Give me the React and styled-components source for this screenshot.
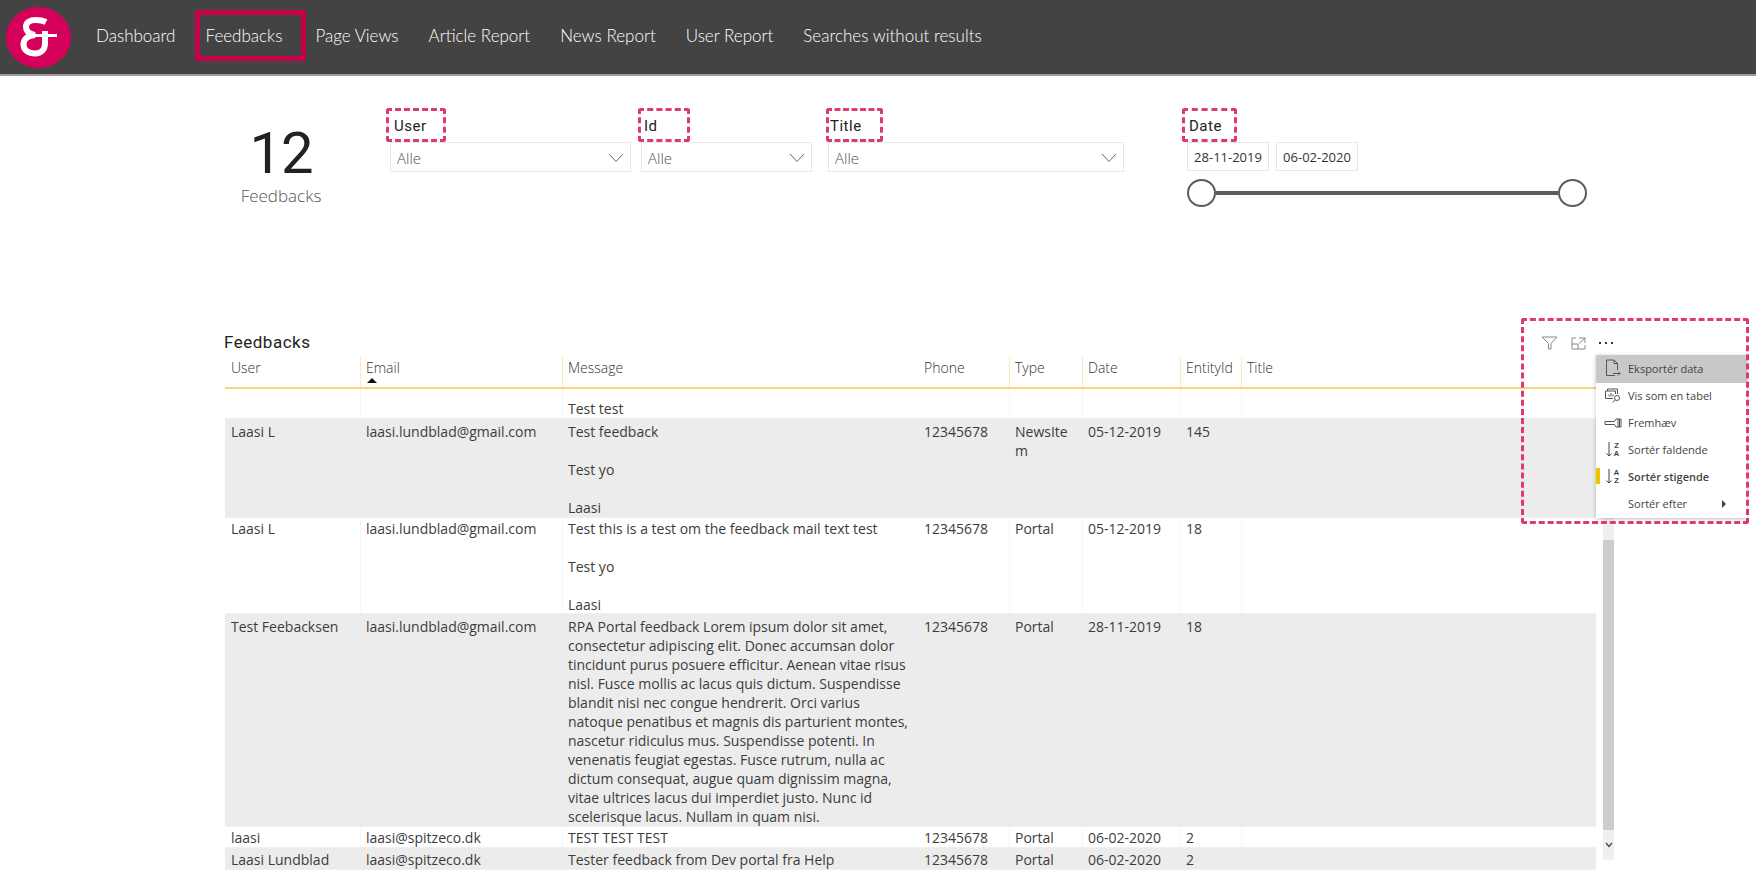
import React from 'react';
import styled, { createGlobalStyle } from 'styled-components';

const GlobalStyle = createGlobalStyle`
  html, body {
    margin: 0;
    padding: 0;
    background: #fff;
  }
  body {
    font-family: "Open Sans", "Liberation Sans", sans-serif;
    overflow: hidden;
  }
`;

const PINK = '#de3a72';

// --- nav ---
const Page = styled.div`
  position: relative;
  width: 1756px;
  height: 876px;
  overflow: hidden;
`;

const Nav = styled.nav`
  display: flex;
  align-items: center;
  height: 74px;
  box-sizing: content-box;
  background: #434343;
  border-bottom: 2px solid #9a9a9a;
  padding-left: 6px;
`;

const LogoWrap = styled.div`
  width: 65px;
  height: 61px;
  flex-shrink: 0;
  margin-right: 10px;
  svg { display: block; }
`;

const NavList = styled.div`
  display: flex;
  align-items: center;
  margin-bottom: 3px;
`;

const NavItem = styled.a`
  font-family: Lato, "Liberation Sans", sans-serif;
  font-size: 17px;
  font-weight: 300;
  color: #fff;
  white-space: nowrap;
  padding: ${p => (p.$active ? '0 19px 0 6px' : '0 15px')};
  line-height: 41px;
  border: ${p => (p.$active ? '5px solid #c8004a' : '5px solid transparent')};
  border-radius: 2px;
  margin: ${p => (p.$active ? '0 -6px 0 4px' : '0 -5px')};
`;

// --- filters ---
const FilterRow = styled.section`
  display: flex;
  padding: 32px 0 0 221px;
  height: 208px;
`;

const Kpi = styled.div`
  width: 120px;
  margin-right: 49px;
  padding-top: 14px;
  text-align: center;
`;

const KpiValue = styled.div`
  font-family: Roboto, sans-serif;
  font-size: 58px;
  line-height: 62px;
  letter-spacing: -1px;
  color: #222;
`;

const KpiLabel = styled.div`
  font-size: 17px;
  font-weight: 300;
  line-height: 22px;
  margin-top: 1px;
  color: #555;
`;

const Filter = styled.div`
  width: ${p => p.$w}px;
  margin-left: ${p => p.$ml || 0}px;
`;

const FilterLabel = styled.div`
  display: block;
  box-sizing: border-box;
  width: ${p => p.$w}px;
  height: 34px;
  line-height: 30px;
  padding-left: ${p => p.$pl}px;
  margin-left: ${p => p.$ml || 0}px;
  font-family: Roboto, sans-serif;
  font-size: 15px;
  letter-spacing: 0.5px;
  color: #222;
  border: 3px dashed ${PINK};
  border-radius: 3px;
`;

const Select = styled.div`
  display: flex;
  align-items: center;
  justify-content: space-between;
  box-sizing: border-box;
  height: 30px;
  padding: 1px 6px 0;
  font-size: 15px;
  font-weight: 300;
  color: #555;
  border: 1px solid #e8e8e8;
  svg { display: block; }
`;

const DateInputs = styled.div`
  display: flex;
  gap: 7px;
`;

const DateInput = styled.div`
  width: 82px;
  height: 29px;
  box-sizing: border-box;
  border: 1px solid #e8e8e8;
  font-size: 13px;
  line-height: 28px;
  text-align: center;
  color: #333;
`;

const Slider = styled.div`
  display: flex;
  align-items: center;
  margin-top: 8px;
`;

const Thumb = styled.div`
  width: 29px;
  height: 28px;
  box-sizing: border-box;
  border: 2px solid #5c5c5c;
  border-radius: 50%;
  background: #fff;
  flex-shrink: 0;
`;

const Track = styled.div`
  flex: 1;
  height: 4px;
  background: #5c5c5c;
`;

// --- table ---
const Section = styled.section`
  padding-left: 225px;
  width: 1371px;
`;

const SectionTitle = styled.h2`
  margin: 0 0 0 -1px;
  height: 33px;
  box-sizing: border-box;
  padding-top: 17px;
  font-family: Roboto, sans-serif;
  font-weight: 400;
  font-size: 17px;
  letter-spacing: 0.5px;
  line-height: 18px;
  color: #222;
`;

const COLUMNS = '135px 202px 356px 91px 73px 98px 61px 355px';

const HeaderRow = styled.div`
  display: grid;
  grid-template-columns: ${COLUMNS};
  margin-top: 8px;
  height: 30px;
  border-bottom: 2px solid #fdd27c;
`;

const HeaderCell = styled.div`
  position: relative;
  padding: 0 5px;
  font-size: 14px;
  font-weight: 300;
  line-height: 22px;
  color: #333;
  border-left: 1px solid ${p => (p.$plain ? 'transparent' : '#fde8bd')};
`;

const SortArrow = styled.span`
  position: absolute;
  left: 6px;
  bottom: 4px;
  width: 0;
  height: 0;
  border-left: 5px solid transparent;
  border-right: 5px solid transparent;
  border-bottom: 5px solid #111;
`;

const Body = styled.div`
  height: 481px;
  overflow: hidden;
`;

const Row = styled.div`
  display: grid;
  grid-template-columns: ${COLUMNS};
  height: ${p => p.$h}px;
  box-sizing: border-box;
  background: ${p => (p.$shade ? '#ececec' : '#fff')};
  border-bottom: 1px solid #f0f0f0;
`;

const Cell = styled.div`
  padding: ${p => (p.$bottom ? '0 5px' : `${p.$pt}px 5px 0`)};
  display: ${p => (p.$bottom ? 'flex' : 'block')};
  align-items: flex-end;
  font-size: 14px;
  line-height: 19px;
  color: #3c3c3c;
  white-space: pre;
  overflow: hidden;
  border-left: 1px solid ${p => (p.$plain || p.$shade ? 'transparent' : '#f6f6f6')};
`;

const Scrollbar = styled.div`
  position: absolute;
  left: 1603px;
  top: 518px;
  width: 11px;
  height: 342px;
  display: flex;
  flex-direction: column;
  background: #f0f0f0;
`;

const ScrollThumb = styled.div`
  margin-top: 22px;
  height: 290px;
  background: #cdcdcd;
`;

const ScrollDown = styled.div`
  flex: 1;
  display: flex;
  align-items: center;
  justify-content: center;
  svg { display: block; }
`;

// --- context menu ---
const Annotation = styled.div`
  position: absolute;
  left: 1521px;
  top: 318px;
  width: 228px;
  height: 206px;
  box-sizing: border-box;
  border: 3px dashed ${PINK};
  border-radius: 3px;
  pointer-events: none;
`;

const VisualHeader = styled.div`
  position: absolute;
  left: 1541px;
  top: 336px;
  display: flex;
  align-items: center;
  gap: 13px;
  svg { display: block; }
`;

const Menu = styled.div`
  position: absolute;
  left: 1596px;
  top: 355px;
  width: 151px;
  background: #fff;
  box-shadow: 0 1px 4px rgba(0, 0, 0, 0.25);
`;

const MenuItem = styled.div`
  position: relative;
  display: flex;
  align-items: center;
  height: ${p => (p.$hover ? 28 : 27)}px;
  padding-bottom: 2px;
  box-sizing: border-box;
  background: ${p => (p.$hover ? '#c8c8c8' : '#fff')};
  font-size: 11px;
  font-weight: ${p => (p.$selected ? 600 : 400)};
  color: #444;
  white-space: nowrap;
`;

const MenuIcon = styled.span`
  width: 32px;
  flex-shrink: 0;
  display: flex;
  justify-content: center;
  padding-left: 2px;
  box-sizing: border-box;
  svg { display: block; }
`;

const SelectedMark = styled.span`
  position: absolute;
  left: 0;
  top: 4px;
  width: 4px;
  height: 16px;
  background: #f2c200;
`;

const SubArrow = styled.span`
  position: absolute;
  left: 126px;
  top: 9px;
  width: 0;
  height: 0;
  border-top: 4px solid transparent;
  border-bottom: 4px solid transparent;
  border-left: 4px solid #444;
`;

const Chevron = () => (
  <svg width="16" height="10" viewBox="0 0 16 10" fill="none" stroke="#666" strokeWidth="1">
    <path d="M1 1l7 7.500L15 1" />
  </svg>
);

const Logo = () => (
  <svg width="65" height="61" viewBox="0 0 65 61">
    <ellipse cx="32.500" cy="30.500" rx="32.500" ry="30.500" fill="#d4005a" />
    <g fill="none" stroke="#fff" strokeLinecap="butt">
      <path
        d="M40 15C37 13.500 33 13 29.500 13 24 13 20 15.500 20 20c0 4 3 7 9 8-7 .5-11.500 4-11.500 9.500C17.500 43 22.500 46.500 29 46.500c6.500 0 10-4.500 10-10V24"
        strokeWidth="6"
      />
      <path d="M29 28.500h22" strokeWidth="3" />
    </g>
  </svg>
);

const ICON = { fill: 'none', stroke: '#555', strokeWidth: 1 };

const SortGlyph = ({ top, bottom }) => (
  <svg width="16" height="17" viewBox="0 0 16 17">
    <path d="M4 1v14M1.500 12.500L4 15l2.500-2.500" fill="none" stroke="#444" strokeWidth="1" />
    <text x="11.500" y="7" fontSize="7.500" fontFamily="Liberation Sans" fontWeight="700" textAnchor="middle" fill="#444">{top}</text>
    <text x="11.500" y="15" fontSize="7.500" fontFamily="Liberation Sans" fontWeight="700" textAnchor="middle" fill="#444">{bottom}</text>
  </svg>
);

const icons = {
  export: (
    <svg width="16" height="18" viewBox="0 0 16 18" {...ICON}>
      <path d="M10 16.500H1.500V1H9l3.500 3.500V11M9 1v3.500h3.500M8 14.500h7M13 12.500l2 2-2 2" />
    </svg>
  ),
  table: (
    <svg width="18" height="16" viewBox="0 0 18 16" {...ICON}>
      <path d="M9 10.500H1.500V3h10v3M3.500 3V1h10v5M5 8.500V6.500M7 8.500V5M9 8.500V6.500" />
      <circle cx="13" cy="10" r="2.500" />
      <path d="M11.200 12L8.500 14.500" />
    </svg>
  ),
  spotlight: (
    <svg width="18" height="10" viewBox="0 0 18 10" {...ICON}>
      <path d="M1 3.500h9.500L12 1h5v8h-5l-1.500-2.500H1zM14 1v8M15.500 1v8" />
    </svg>
  ),
  sortDesc: <SortGlyph top="Z" bottom="A" />,
  sortAsc: <SortGlyph top="A" bottom="Z" />,
};

const menuItems = [
  { label: 'Eksportér data', icon: 'export', hover: true },
  { label: 'Vis som en tabel', icon: 'table' },
  { label: 'Fremhæv', icon: 'spotlight' },
  { label: 'Sortér faldende', icon: 'sortDesc' },
  { label: 'Sortér stigende', icon: 'sortAsc', selected: true },
  { label: 'Sortér efter', sub: true },
];

const navItems = ['Dashboard', 'Feedbacks', 'Page Views', 'Article Report', 'News Report', 'User Report', 'Searches without results'];

const headers = ['User', 'Email', 'Message', 'Phone', 'Type', 'Date', 'EntityId', 'Title'];

// Phone has no visible column rule, the first column neither
const PLAIN_COLUMNS = [0, 3];

const rows = [
  { h: 30, bottom: true, cells: ['', '', 'Test test', '', '', '', '', ''] },
  {
    h: 99,
    pt: 3,
    shade: true,
    cells: ['Laasi L', 'laasi.lundblad@gmail.com', 'Test feedback\n\nTest yo\n\nLaasi', '12345678', 'NewsIte\nm', '05-12-2019', '145', ''],
  },
  {
    h: 96,
    pt: 1,
    cells: ['Laasi L', 'laasi.lundblad@gmail.com', 'Test this is a test om the feedback mail text test\n\nTest yo\n\nLaasi', '12345678', 'Portal', '05-12-2019', '18', ''],
  },
  {
    h: 213,
    pt: 3,
    shade: true,
    cells: [
      'Test Feebacksen',
      'laasi.lundblad@gmail.com',
      'RPA Portal feedback Lorem ipsum dolor sit amet,\nconsectetur adipiscing elit. Donec accumsan dolor\ntincidunt purus posuere efficitur. Aenean vitae risus\nnisl. Fusce mollis ac lacus quis dictum. Suspendisse\nblandit nisi nec congue hendrerit. Orci varius\nnatoque penatibus et magnis dis parturient montes,\nnascetur ridiculus mus. Suspendisse potenti. In\nvenenatis feugiat egestas. Fusce rutrum, nulla ac\ndictum consequat, augue quam dignissim magna,\nvitae ultrices lacus dui imperdiet justo. Nunc id\nscelerisque lacus. Nullam in quam nisi.',
      '12345678',
      'Portal',
      '28-11-2019',
      '18',
      '',
    ],
  },
  { h: 21, pt: 1, cells: ['laasi', 'laasi@spitzeco.dk', 'TEST TEST TEST', '12345678', 'Portal', '06-02-2020', '2', ''] },
  { h: 22, pt: 2, shade: true, cells: ['Laasi Lundblad', 'laasi@spitzeco.dk', 'Tester feedback from Dev portal fra Help', '12345678', 'Portal', '06-02-2020', '2', ''] },
];

const App = () => (
  <Page>
    <GlobalStyle />
    <Nav>
      <LogoWrap>
        <Logo />
      </LogoWrap>
      <NavList>
        {navItems.map(item => (
          <NavItem key={item} $active={item === 'Feedbacks'}>
            {item}
          </NavItem>
        ))}
      </NavList>
    </Nav>

    <FilterRow>
      <Kpi>
        <KpiValue>12</KpiValue>
        <KpiLabel>Feedbacks</KpiLabel>
      </Kpi>
      <Filter $w={241}>
        <FilterLabel $ml={-4} $w={60} $pl={5}>User</FilterLabel>
        <Select>
          Alle
          <Chevron />
        </Select>
      </Filter>
      <Filter $w={171} $ml={10}>
        <FilterLabel $ml={-3} $w={52} $pl={3}>Id</FilterLabel>
        <Select>
          Alle
          <Chevron />
        </Select>
      </Filter>
      <Filter $w={296} $ml={16}>
        <FilterLabel $ml={-2} $w={57} $pl={1}>Title</FilterLabel>
        <Select>
          Alle
          <Chevron />
        </Select>
      </Filter>
      <Filter $w={400} $ml={63}>
        <FilterLabel $ml={-5} $w={55} $pl={4}>Date</FilterLabel>
        <DateInputs>
          <DateInput>28-11-2019</DateInput>
          <DateInput>06-02-2020</DateInput>
        </DateInputs>
        <Slider>
          <Thumb />
          <Track />
          <Thumb />
        </Slider>
      </Filter>
    </FilterRow>

    <Section>
      <SectionTitle>Feedbacks</SectionTitle>
      <HeaderRow>
        {headers.map((h, i) => (
          <HeaderCell key={h} $plain={PLAIN_COLUMNS.includes(i)}>
            {h}
            {h === 'Email' && <SortArrow />}
          </HeaderCell>
        ))}
      </HeaderRow>
      <Body>
        {rows.map((row, r) => (
          <Row key={r} $h={row.h} $shade={row.shade}>
            {row.cells.map((c, i) => (
              <Cell key={i} $plain={PLAIN_COLUMNS.includes(i)} $shade={row.shade} $bottom={row.bottom} $pt={row.pt}>
                {c}
              </Cell>
            ))}
          </Row>
        ))}
      </Body>
    </Section>

    <Scrollbar>
      <ScrollThumb />
      <ScrollDown>
        <svg width="8" height="6" viewBox="0 0 8 6" fill="none" stroke="#444" strokeWidth="1.200">
          <path d="M1 1l3 3.500L7 1" />
        </svg>
      </ScrollDown>
    </Scrollbar>

    <VisualHeader>
      <svg width="17" height="14" viewBox="0 0 17 14" fill="none" stroke="#888" strokeWidth="1">
        <path d="M1 1h15l-6 6.500V13H7.500V7.500z" />
      </svg>
      <svg width="15" height="13" viewBox="0 0 15 13" fill="none" stroke="#888" strokeWidth="1">
        <path d="M5 1H1v11h13V8M1 7h6v5M8 1h6v5M14 1L8 6.500" />
      </svg>
      <svg width="15" height="4" viewBox="0 0 15 4" fill="#333">
        <rect x="0" y="1" width="2" height="2" />
        <rect x="6" y="1" width="2" height="2" />
        <rect x="12" y="1" width="2" height="2" />
      </svg>
    </VisualHeader>

    <Menu>
      {menuItems.map(item => (
        <MenuItem key={item.label} $hover={item.hover} $selected={item.selected}>
          {item.selected && <SelectedMark />}
          <MenuIcon>{item.icon && icons[item.icon]}</MenuIcon>
          {item.label}
          {item.sub && <SubArrow />}
        </MenuItem>
      ))}
    </Menu>

    <Annotation />
  </Page>
);

export default App;
